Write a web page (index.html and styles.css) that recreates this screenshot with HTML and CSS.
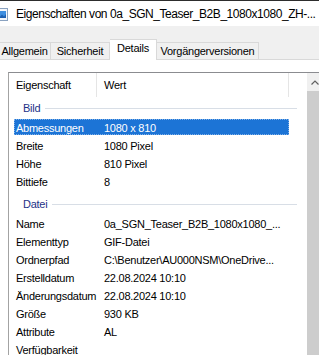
FILE: index.html
```html
<!DOCTYPE html>
<html lang="de">
<head>
  <meta charset="UTF-8">
  <title>Eigenschaften</title>
  <link rel="stylesheet" href="styles.css">
</head>
<body>

  <div class="titlebar">
    <svg class="app-icon" width="11" height="13" viewBox="0 0 11 13">
      <rect x="0.5" y="0.5" width="10" height="12" fill="#f4f7fb" stroke="#8aa2c0"/>
      <rect x="2" y="3" width="7" height="7" fill="#3d8ee0"/>
      <path d="M2 10 L5 6.5 L7 8.5 L9 6 L9 10 Z" fill="#1d5fb0"/>
    </svg>
    <span class="title">Eigenschaften von 0a_SGN_Teaser_B2B_1080x1080_ZH-...</span>
  </div>

  <div class="tabs">
    <div class="tab tab-allgemein">Allgemein</div>
    <div class="tab tab-sicherheit">Sicherheit</div>
    <div class="tab tab-details aktiv">Details</div>
    <div class="tab tab-versionen">Vorgängerversionen</div>
  </div>

  <div class="page">
    <div class="listview">
      <div class="list">
        <div class="header">
          <div class="col-name">Eigenschaft</div>
          <div class="col-value">Wert</div>
        </div>

        <div class="group"><span>Bild</span></div>
        <div class="row selected"><div class="col-name">Abmessungen</div><div class="col-value">1080 x 810</div></div>
        <div class="row"><div class="col-name">Breite</div><div class="col-value">1080 Pixel</div></div>
        <div class="row"><div class="col-name">Höhe</div><div class="col-value">810 Pixel</div></div>
        <div class="row"><div class="col-name">Bittiefe</div><div class="col-value">8</div></div>

        <div class="group"><span>Datei</span></div>
        <div class="row"><div class="col-name">Name</div><div class="col-value">0a_SGN_Teaser_B2B_1080x1080_...</div></div>
        <div class="row"><div class="col-name">Elementtyp</div><div class="col-value">GIF-Datei</div></div>
        <div class="row"><div class="col-name">Ordnerpfad</div><div class="col-value">C:\Benutzer\AU000NSM\OneDrive...</div></div>
        <div class="row"><div class="col-name">Erstelldatum</div><div class="col-value">22.08.2024 10:10</div></div>
        <div class="row"><div class="col-name">Änderungsdatum</div><div class="col-value">22.08.2024 10:10</div></div>
        <div class="row"><div class="col-name">Größe</div><div class="col-value">930 KB</div></div>
        <div class="row"><div class="col-name">Attribute</div><div class="col-value">AL</div></div>
        <div class="row"><div class="col-name">Verfügbarkeit</div><div class="col-value"></div></div>
      </div>

      <div class="scrollbar">
        <div class="scroll-up">
          <svg width="8" height="5" viewBox="0 0 8 5">
            <polyline points="0.5,4.5 4,1 7.5,4.5" fill="none" stroke="#606060" stroke-width="1.2"/>
          </svg>
        </div>
        <div class="thumb"></div>
      </div>
    </div>
  </div>

</body>
</html>
```

FILE: styles.css
```css
body {
  margin: 0;
  width: 319px;
  height: 355px;
  overflow: hidden;
  background-color: #fff;
  font-family: 'Liberation Sans', Arial, sans-serif;
  font-size: 11px;
  letter-spacing: -0.25px;
  color: #000;
}
.titlebar {
  box-sizing: border-box;
  height: 26px;
  border-top: 1px solid #2d2d2d;
  display: flex;
  align-items: center;
  overflow: hidden;
}
.app-icon {
  margin-left: -3px;
  margin-top: 2px;
  flex-shrink: 0;
}
.title {
  margin-left: 8px;
  font-size: 12px;
  letter-spacing: -0.45px;
  white-space: nowrap;
}
.tabs {
  height: 33px;
  background-color: #f0f0f0;
  display: flex;
  align-items: flex-end;
}
.tab {
  box-sizing: border-box;
  height: 17px;
  border: 1px solid #d9d9d9;
  border-bottom: none;
  border-left: none;
  text-align: center;
  line-height: 17px;
  white-space: nowrap;
}
.tab-allgemein {
  width: 52px;
  margin-left: -1px;
}
.tab-sicherheit {
  width: 59px;
}
.tab-details {
  width: 47px;
}
.tab-versionen {
  width: 102px;
}
.tab.aktiv {
  height: 21px;
  margin-bottom: -1px;
  background-color: #fff;
  line-height: 17px;
  position: relative;
}
.page {
  border-top: 1px solid #d9d9d9;
  padding: 12px 0 0 8px;
}
.listview {
  height: 290px;
  border-top: 1px solid #8b8c90;
  border-left: 1px solid #a3a3a3;
  display: flex;
}
.list {
  width: 298px;
  flex-shrink: 0;
}
.header {
  display: flex;
  height: 24px;
  line-height: 24px;
}
.header .col-name,
.header .col-value {
  border-right: 1px solid #e5e5e5;
}
.col-name {
  box-sizing: border-box;
  width: 88px;
  padding-left: 7px;
  white-space: nowrap;
}
.col-value {
  box-sizing: border-box;
  width: 192px;
  padding-left: 7px;
  white-space: nowrap;
  overflow: hidden;
}
.group {
  height: 22px;
  display: flex;
  align-items: center;
  padding-left: 14px;
  color: #1e3287;
}
.group::after {
  content: "";
  flex: 1;
  height: 1px;
  margin: 1px 10px 0 5px;
  background-color: #d8dee6;
}
.row + .group {
  margin-top: 2px;
}
.row {
  display: flex;
  height: 18px;
  line-height: 18px;
}
.row.selected {
  position: relative;
  color: #fff;
  background: linear-gradient(#1c74d6, #1c74d6) 5px 0 / 275px 16px no-repeat;
}
.row.selected::after {
  content: "";
  position: absolute;
  left: 5px;
  top: 0;
  width: 273px;
  height: 14px;
  border: 1px dotted #7fb0e8;
}
.scrollbar {
  flex: 1;
  display: flex;
  flex-direction: column;
}
.scroll-up {
  height: 18px;
  background-color: #f0f0f0;
  display: flex;
  align-items: center;
  padding-left: 4px;
}
.thumb {
  flex: 1;
  background-color: #cdcdcd;
}
```
